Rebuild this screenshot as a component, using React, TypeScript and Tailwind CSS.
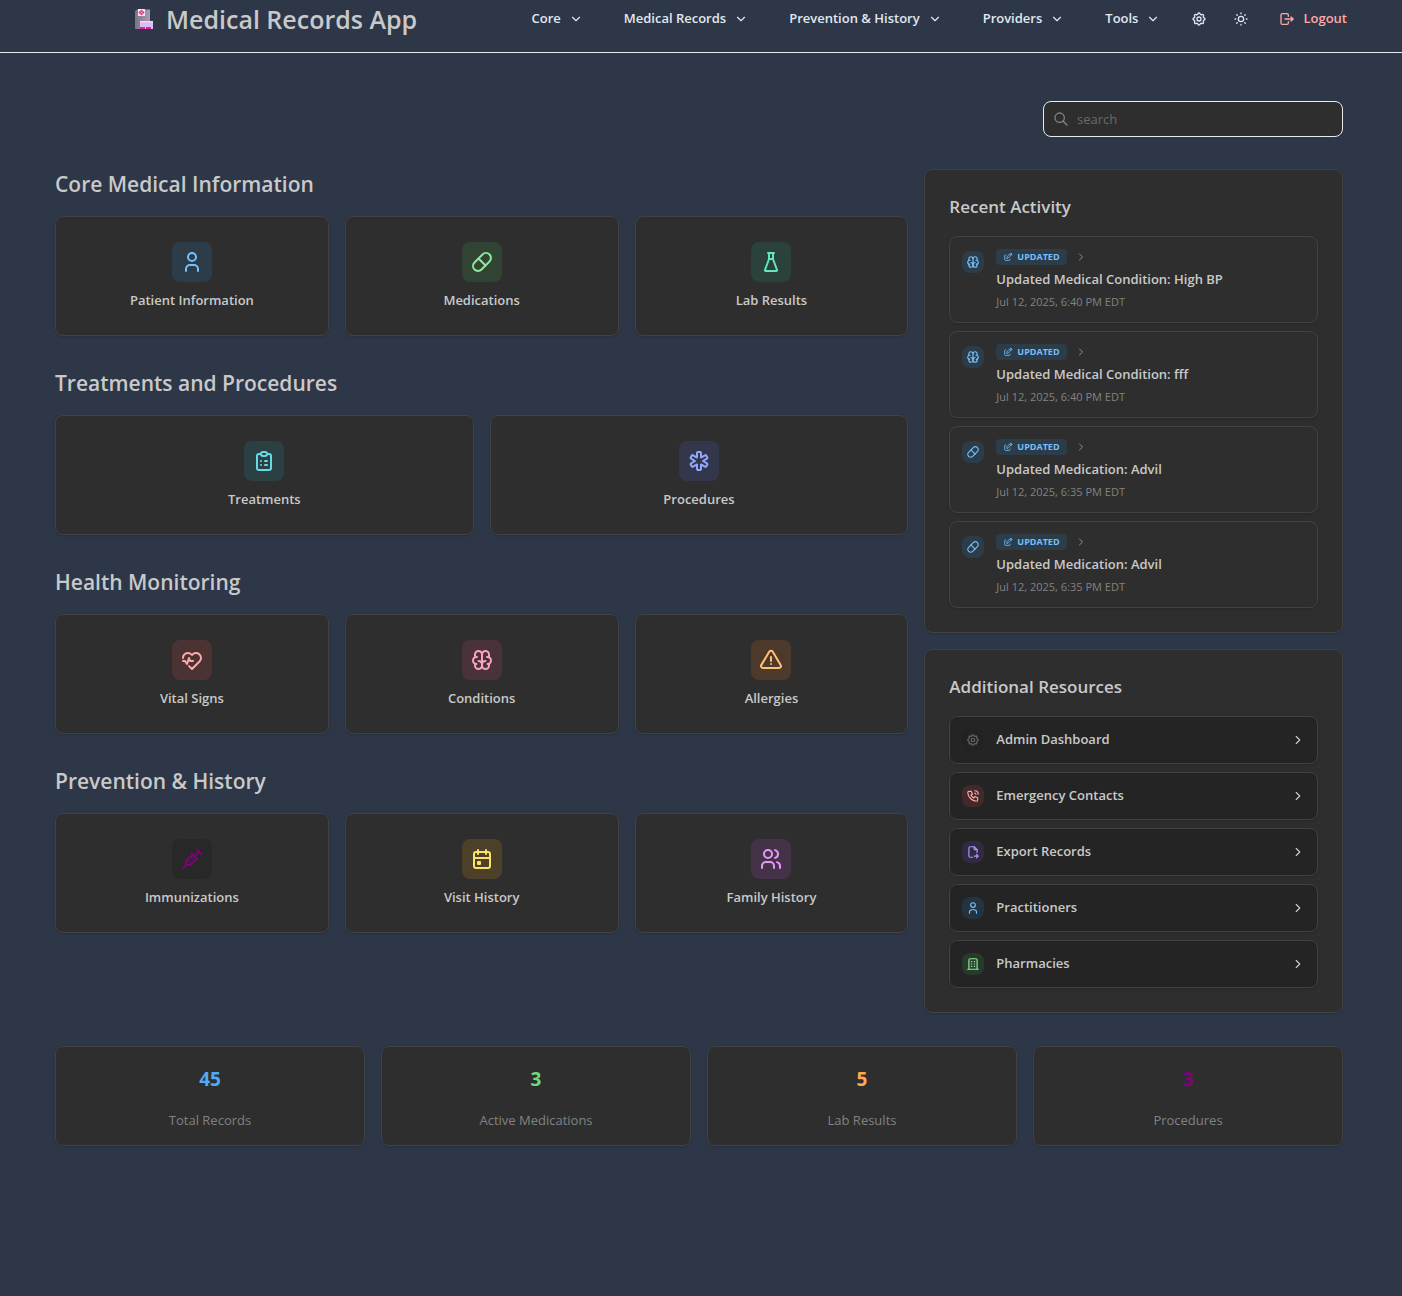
import type { ReactNode } from 'react';
import type { IconType } from 'react-icons';
import {
  TbAlertTriangle,
  TbBrain,
  TbBuilding,
  TbCalendarEvent,
  TbChevronDown,
  TbChevronRight,
  TbClipboardList,
  TbEdit,
  TbFileExport,
  TbFlask,
  TbHeartbeat,
  TbLogout,
  TbMedicalCross,
  TbPhoneCall,
  TbPill,
  TbSearch,
  TbSettings,
  TbSun,
  TbUser,
  TbUsers,
  TbVaccine,
} from 'react-icons/tb';

const tones = {
  blue: 'bg-[#228be6]/15 text-[#74c0fc]',
  green: 'bg-[#40c057]/15 text-[#8ce99a]',
  teal: 'bg-[#12b886]/15 text-[#63e6be]',
  cyan: 'bg-[#15aabf]/15 text-[#66d9e8]',
  indigo: 'bg-[#4c6ef5]/15 text-[#91a7ff]',
  red: 'bg-[#fa5252]/15 text-[#ffa8a8]',
  pink: 'bg-[#e64980]/15 text-[#faa2c1]',
  orange: 'bg-[#fd7e14]/15 text-[#ffc078]',
  yellow: 'bg-[#fab005]/15 text-[#ffe066]',
  grape: 'bg-[#be4bdb]/15 text-[#e599f7]',
  violet: 'bg-[#7950f2]/15 text-[#b197fc]',
  purple: 'bg-[#282828] text-[#800080]',
  gray: 'bg-[#222222] text-[#696969]',
};

type Tone = keyof typeof tones;

const menus = ['Core', 'Medical Records', 'Prevention & History', 'Providers', 'Tools'];

const sections: { title: string; columns: string; items: { label: string; icon: IconType; tone: Tone }[] }[] = [
  {
    title: 'Core Medical Information',
    columns: 'grid-cols-3',
    items: [
      { label: 'Patient Information', icon: TbUser, tone: 'blue' },
      { label: 'Medications', icon: TbPill, tone: 'green' },
      { label: 'Lab Results', icon: TbFlask, tone: 'teal' },
    ],
  },
  {
    title: 'Treatments and Procedures',
    columns: 'grid-cols-2',
    items: [
      { label: 'Treatments', icon: TbClipboardList, tone: 'cyan' },
      { label: 'Procedures', icon: TbMedicalCross, tone: 'indigo' },
    ],
  },
  {
    title: 'Health Monitoring',
    columns: 'grid-cols-3',
    items: [
      { label: 'Vital Signs', icon: TbHeartbeat, tone: 'red' },
      { label: 'Conditions', icon: TbBrain, tone: 'pink' },
      { label: 'Allergies', icon: TbAlertTriangle, tone: 'orange' },
    ],
  },
  {
    title: 'Prevention & History',
    columns: 'grid-cols-3',
    items: [
      { label: 'Immunizations', icon: TbVaccine, tone: 'purple' },
      { label: 'Visit History', icon: TbCalendarEvent, tone: 'yellow' },
      { label: 'Family History', icon: TbUsers, tone: 'grape' },
    ],
  },
];

const activity: { title: string; date: string; icon: IconType }[] = [
  { title: 'Updated Medical Condition: High BP', date: 'Jul 12, 2025, 6:40 PM EDT', icon: TbBrain },
  { title: 'Updated Medical Condition: fff', date: 'Jul 12, 2025, 6:40 PM EDT', icon: TbBrain },
  { title: 'Updated Medication: Advil', date: 'Jul 12, 2025, 6:35 PM EDT', icon: TbPill },
  { title: 'Updated Medication: Advil', date: 'Jul 12, 2025, 6:35 PM EDT', icon: TbPill },
];

const resources: { label: string; icon: IconType; tone: Tone }[] = [
  { label: 'Admin Dashboard', icon: TbSettings, tone: 'gray' },
  { label: 'Emergency Contacts', icon: TbPhoneCall, tone: 'red' },
  { label: 'Export Records', icon: TbFileExport, tone: 'violet' },
  { label: 'Practitioners', icon: TbUser, tone: 'blue' },
  { label: 'Pharmacies', icon: TbBuilding, tone: 'green' },
];

const stats = [
  { value: '45', label: 'Total Records', color: 'text-[#4dabf7]' },
  { value: '3', label: 'Active Medications', color: 'text-[#69db7c]' },
  { value: '5', label: 'Lab Results', color: 'text-[#ffa94d]' },
  { value: '3', label: 'Procedures', color: 'text-[#800080]' },
];

function HospitalLogo() {
  return (
    <svg width="20" height="20" viewBox="0 0 20 20" aria-hidden="true">
      <defs>
        <linearGradient id="tower" x1="0" x2="1" y1="0" y2="0">
          <stop offset="0" stopColor="#7d7288" />
          <stop offset="1" stopColor="#a99bb5" />
        </linearGradient>
      </defs>
      <path d="M1 2l2-1.500h13V20H1z" fill="url(#tower)" />
      <rect x="4" y="0" width="7" height="7" fill="#f6e9f7" />
      <g fill="#e0407e">
        <circle cx="7.500" cy="1.900" r="1.200" />
        <circle cx="7.500" cy="5.100" r="1.200" />
        <circle cx="5.900" cy="3.500" r="1.200" />
        <circle cx="9.100" cy="3.500" r="1.200" />
      </g>
      <rect x="6" y="12" width="13" height="8" fill="#d9bdf3" />
      <rect x="6" y="12" width="13" height="1.500" fill="#e9d8fb" />
      <path d="M6 18h5v2H6zM12 18h5v2h-5z" fill="#e01fa0" />
    </svg>
  );
}

function Panel({ title, children }: { title: string; children: ReactNode }) {
  return (
    <section className="rounded-lg border border-[#424242] bg-[#2e2e2e] p-6 shadow-sm">
      <h2 className="mb-4 text-[17px] leading-[26px] font-semibold">{title}</h2>
      <div className="flex flex-col gap-2">{children}</div>
    </section>
  );
}

function SmallIcon({ icon: Icon, tone }: { icon: IconType; tone: Tone }) {
  return (
    <span className={`flex size-[22px] shrink-0 items-center justify-center rounded-lg ${tones[tone]}`}>
      <Icon size={14} />
    </span>
  );
}

export default function App() {
  return (
    <div className="min-h-screen bg-[#2d3748] pb-16 font-['Open_Sans','Noto_Sans',sans-serif] text-[#c9c9c9]">
      <header className="flex h-[53px] items-start justify-between border-b border-[#e9ecef] pr-[55px] pl-[134px]">
        <h1 className="flex items-center gap-3 text-[25px] leading-[38px] font-semibold whitespace-nowrap">
          <HospitalLogo />
          Medical Records App
        </h1>
        <nav className="flex h-[37px] items-center text-[13px] font-semibold whitespace-nowrap text-[#e2e8f0]">
          {menus.map((menu) => (
            <button key={menu} type="button" className="mr-[41px] flex items-center gap-2">
              {menu}
              <TbChevronDown size={14} />
            </button>
          ))}
          <button type="button" aria-label="Settings" className="mr-[26px] -ml-2.5">
            <TbSettings size={16} />
          </button>
          <button type="button" aria-label="Toggle color scheme" className="mr-[30px]">
            <TbSun size={16} />
          </button>
          <button type="button" className="flex items-center gap-2 text-[#ffa8a8]">
            <TbLogout size={16} />
            Logout
          </button>
        </nav>
      </header>

      <main className="mr-1">
        <div className="mx-auto max-w-[1320px] px-4 pt-12">
          <div className="flex justify-end">
            <label className="flex h-9 w-[300px] items-center gap-2 rounded-lg border border-[#e9ecef] bg-[#2e2e2e] px-[9px]">
              <TbSearch size={16} className="text-[#828282]" />
              <input
                type="text"
                aria-label="Search"
                placeholder="search"
                className="min-w-0 flex-1 bg-transparent pt-0.5 text-[13px] outline-none placeholder:text-[#696969]"
              />
            </label>
          </div>

          <div className="mt-8 grid grid-cols-3 items-start gap-4">
            <div className="col-span-2 flex flex-col gap-8">
              {sections.map((section) => (
                <section key={section.title}>
                  <h2 className="mb-4 text-[21px] leading-[31px] font-semibold">{section.title}</h2>
                  <div className={`grid gap-4 ${section.columns}`}>
                    {section.items.map(({ label, icon: Icon, tone }) => (
                      <button
                        key={label}
                        type="button"
                        className="flex h-[120px] flex-col items-center justify-center gap-2 rounded-lg border border-[#424242] bg-[#2e2e2e] shadow-sm"
                      >
                        <span className={`flex size-10 items-center justify-center rounded-lg ${tones[tone]}`}>
                          <Icon size={24} />
                        </span>
                        <span className="text-[13px] leading-5 font-semibold">{label}</span>
                      </button>
                    ))}
                  </div>
                </section>
              ))}
            </div>

            <aside className="flex flex-col gap-4">
              <Panel title="Recent Activity">
                {activity.map((entry, i) => (
                  <article key={i} className="flex gap-3 rounded-lg border border-[#424242] p-3 shadow-sm">
                    <div className="pt-0.5">
                      <SmallIcon icon={entry.icon} tone="blue" />
                    </div>
                    <div>
                      <div className="flex items-center gap-2">
                        <span className="flex h-4 items-center gap-1 rounded-sm bg-[#228be6]/15 px-[7px] text-[9px] font-bold text-[#74c0fc]">
                          <TbEdit size={10} />
                          UPDATED
                        </span>
                        <TbChevronRight size={12} className="text-[#909090]" />
                      </div>
                      <h3 className="mt-1 text-[13px] leading-5 font-semibold">{entry.title}</h3>
                      <p className="mt-1 text-[11px] leading-[17px] text-[#828282]">{entry.date}</p>
                    </div>
                  </article>
                ))}
              </Panel>

              <Panel title="Additional Resources">
                {resources.map(({ label, icon, tone }) => (
                  <button
                    key={label}
                    type="button"
                    className="flex h-12 items-center gap-3 rounded-lg border border-[#424242] bg-[#242424] px-3 text-left shadow-sm"
                  >
                    <SmallIcon icon={icon} tone={tone} />
                    <span className="flex-1 text-[13px] font-semibold">{label}</span>
                    <TbChevronRight size={14} />
                  </button>
                ))}
              </Panel>
            </aside>
          </div>

          <div className="mt-[33px] grid grid-cols-4 gap-4">
            {stats.map((stat) => (
              <div
                key={stat.label}
                className="flex flex-col items-center gap-[15px] rounded-lg border border-[#424242] bg-[#2e2e2e] px-4 pt-4 pb-[15px] shadow-sm"
              >
                <span className={`text-[19px] leading-8 font-bold ${stat.color}`}>{stat.value}</span>
                <span className="text-[13px] leading-5 text-[#828282]">{stat.label}</span>
              </div>
            ))}
          </div>
        </div>
      </main>
    </div>
  );
}
